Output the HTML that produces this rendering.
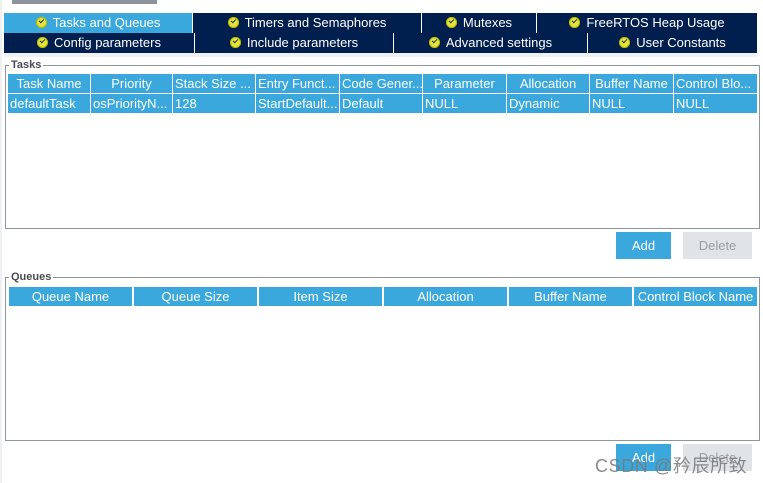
<!DOCTYPE html>
<html><head><style>
*{margin:0;padding:0;box-sizing:border-box}
body{width:763px;height:483px;background:#fff;font-family:"Liberation Sans",sans-serif;font-size:13px;position:relative;overflow:hidden}
.a{position:absolute}
.tab{position:absolute;height:20px;background:#001e4e;color:#fff;text-align:center;line-height:20px;font-size:13px;border-right:1px solid #fff}
.tab.on{background:#3aa8dc}
.ck{display:inline-block;width:11px;height:11px;border-radius:50%;background:#e6e43a;vertical-align:-1px;margin-right:6px;position:relative;box-shadow:inset 0 0 0 1px #b5b800}
.ck:after{content:"";position:absolute;left:3px;top:2px;width:4px;height:2px;border-left:1.5px solid #1c3060;border-bottom:1.5px solid #1c3060;transform:rotate(-45deg)}
.fs{position:absolute;border:1px solid #8f969b;left:5px;width:755px}
.lg{position:absolute;background:#fff;font-weight:bold;color:#4a4a55;font-size:11px;padding:0 2px;left:3px;top:-8px;line-height:14px}
.c{position:absolute;background:#3aa8dc;color:#fff;height:19px;line-height:19px;white-space:nowrap;overflow:hidden}
.h{text-align:center}
.d{padding-left:2px}
.btn{position:absolute;height:27px;line-height:27px;text-align:center;font-size:13px}
</style></head><body>
<div class="a" style="left:12px;top:0;width:145px;height:4px;background:#8c9399"></div>
<div class="a" style="left:0;top:0;width:2px;height:483px;background:#eef0f2"></div>
<div class="tab on" style="left:4px;top:13px;width:189px">
<span class="ck"></span>Tasks and Queues</div>
<div class="tab" style="left:193px;top:13px;width:229px"><span class="ck"></span>Timers and Semaphores</div>
<div class="tab" style="left:422px;top:13px;width:115px"><span class="ck"></span>Mutexes</div>
<div class="tab" style="left:537px;top:13px;width:220px;border-right:0"><span class="ck"></span>FreeRTOS Heap Usage</div>
<div class="tab" style="left:4px;top:33px;width:191px"><span class="ck"></span>Config parameters</div>
<div class="tab" style="left:195px;top:33px;width:199px"><span class="ck"></span>Include parameters</div>
<div class="tab" style="left:394px;top:33px;width:194px"><span class="ck"></span>Advanced settings</div>
<div class="tab" style="left:588px;top:33px;width:169px;border-right:0"><span class="ck"></span>User Constants</div>
<div class="a" style="left:4px;top:53px;width:753px;height:4px;background:#eef0f2"></div>

<div class="fs" style="top:65px;height:164px"><div class="lg">Tasks</div></div>
<div class="c h" style="left:8px;top:74px;width:82px">Task Name</div>
<div class="c h" style="left:91px;top:74px;width:81px">Priority</div>
<div class="c d" style="left:173px;top:74px;width:82px">Stack Size ...</div>
<div class="c d" style="left:256px;top:74px;width:83px">Entry Funct...</div>
<div class="c d" style="left:340px;top:74px;width:82px">Code Gener...</div>
<div class="c h" style="left:423px;top:74px;width:83px">Parameter</div>
<div class="c h" style="left:507px;top:74px;width:82px">Allocation</div>
<div class="c h" style="left:590px;top:74px;width:83px">Buffer Name</div>
<div class="c d" style="left:674px;top:74px;width:83px">Control Blo...</div>
<div class="c d" style="left:8px;top:94px;width:82px">defaultTask</div>
<div class="c d" style="left:91px;top:94px;width:81px">osPriorityN...</div>
<div class="c d" style="left:173px;top:94px;width:82px">128</div>
<div class="c d" style="left:256px;top:94px;width:83px">StartDefault...</div>
<div class="c d" style="left:340px;top:94px;width:82px">Default</div>
<div class="c d" style="left:423px;top:94px;width:83px">NULL</div>
<div class="c d" style="left:507px;top:94px;width:82px">Dynamic</div>
<div class="c d" style="left:590px;top:94px;width:83px">NULL</div>
<div class="c d" style="left:674px;top:94px;width:83px">NULL</div>

<div class="btn" style="left:616px;top:232px;width:55px;background:#3aa8dc;color:#fff">Add</div>
<div class="btn" style="left:683px;top:232px;width:69px;background:#e1e4e6;color:#9a9ea2">Delete</div>

<div class="fs" style="top:277px;height:164px"><div class="lg">Queues</div></div>
<div class="c h" style="left:9px;top:287px;width:123px">Queue Name</div>
<div class="c h" style="left:134px;top:287px;width:123px">Queue Size</div>
<div class="c h" style="left:259px;top:287px;width:123px">Item Size</div>
<div class="c h" style="left:384px;top:287px;width:123px">Allocation</div>
<div class="c h" style="left:509px;top:287px;width:123px">Buffer Name</div>
<div class="c h" style="left:634px;top:287px;width:123px">Control Block Name</div>

<div class="btn" style="left:616px;top:444px;width:55px;background:#3aa8dc;color:#fff">Add</div>
<div class="btn" style="left:683px;top:444px;width:69px;background:#e1e4e6;color:#9a9ea2">Delete</div>
<div class="a" style="left:595px;top:452px;font-size:18px;letter-spacing:0.6px;color:rgba(120,120,120,0.85);font-family:'Liberation Sans','Noto Sans CJK SC',sans-serif;white-space:nowrap">CSDN @矜辰所致</div>
</body></html>
